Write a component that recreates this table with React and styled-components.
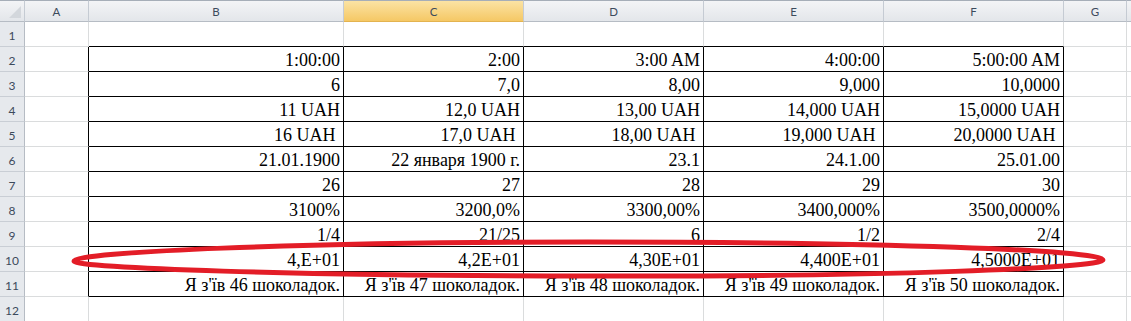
import React from "react";
import styled, { createGlobalStyle, css } from "styled-components";

const Global = createGlobalStyle`
  html, body { margin: 0; padding: 0; background: #ffffff; }
  body { width: 1131px; height: 321px; overflow: hidden; }
`;

const COLS = ["A", "B", "C", "D", "E", "F", "G", ""];
const WIDTHS = "25px 64px 255px 180px 180px 180px 180px 63px 1fr";
const GRID = "#dadcdd";
const HEAD_LINE = "#c5cbd3";

const Sheet = styled.div`
  position: relative;
  display: grid;
  grid-template-columns: ${WIDTHS};
  grid-template-rows: 22px repeat(12, 25px);
  width: 1131px;
  height: 321px;
  overflow: hidden;
`;

const HeadCell = styled.div`
  box-sizing: border-box;
  display: flex;
  align-items: center;
  justify-content: center;
  font-family: Lato, "Liberation Sans", sans-serif;
  font-size: 11.5px;
  color: #3c4a5c;
  border-top: 1px solid #a6aeb8;
  border-right: 1px solid ${HEAD_LINE};
  border-bottom: 1px solid #b6bcc4;
  background: linear-gradient(#f3f4f6, #e3e6ea);
  ${(p) =>
    p.$active &&
    css`
      background: linear-gradient(#fbe3a4, #f5c865);
      border-bottom-color: #e3b350;
      color: #3c4a5c;
    `}
`;

const Corner = styled(HeadCell)`
  position: relative;
  &::after {
    content: "";
    position: absolute;
    right: 3px;
    bottom: 3px;
    width: 0;
    height: 0;
    border-left: 12px solid transparent;
    border-bottom: 12px solid #d3d7dc;
  }
`;

const RowHead = styled.div`
  box-sizing: border-box;
  display: flex;
  align-items: center;
  justify-content: center;
  padding-top: 2px;
  font-family: Lato, "Liberation Sans", sans-serif;
  font-size: 12px;
  color: #3c4a5c;
  background: #e6e9ed;
  border-right: 1px solid #b6bcc4;
  border-bottom: 1px solid #c9ced5;
`;

const Cell = styled.div`
  box-sizing: border-box;
  display: flex;
  align-items: flex-end;
  justify-content: flex-end;
  padding: 0 3px 1px 2px;
  font-family: "Liberation Serif", "Times New Roman", serif;
  font-size: 18px;
  line-height: 20px;
  color: #000;
  white-space: pre;
  border-right: 1px solid ${(p) => (p.$edgeRight ? "#000" : GRID)};
  border-bottom: 1px solid ${(p) => (p.$edgeBottom ? "#000" : GRID)};
`;

const Overlay = styled.svg`
  position: absolute;
  left: 0;
  top: 0;
  pointer-events: none;
`;

const data = [
  ["1:00:00", "2:00", "3:00 AM", "4:00:00", "5:00:00 AM"],
  ["6", "7,0", "8,00", "9,000", "10,0000"],
  ["11 UAH", "12,0 UAH", "13,00 UAH", "14,000 UAH", "15,0000 UAH"],
  ["16 UAH ", "17,0 UAH ", "18,00 UAH ", "19,000 UAH ", "20,0000 UAH "],
  ["21.01.1900", "22 января 1900 г.", "23.1", "24.1.00", "25.01.00"],
  ["26", "27", "28", "29", "30"],
  ["3100%", "3200,0%", "3300,00%", "3400,000%", "3500,0000%"],
  ["1/4", "21/25", "6", "1/2", "2/4"],
  ["4,E+01", "4,2E+01", "4,30E+01", "4,400E+01", "4,5000E+01"],
  [
    "Я з'їв 46 шоколадок.",
    "Я з'їв 47 шоколадок.",
    "Я з'їв 48 шоколадок.",
    "Я з'їв 49 шоколадок.",
    "Я з'їв 50 шоколадок.",
  ],
];

function cellValue(row, col) {
  if (row >= 2 && row <= 11 && col >= 1 && col <= 5) return data[row - 2][col - 1];
  return "";
}

export default function App() {
  const rows = Array.from({ length: 12 }, (_, i) => i + 1);
  return (
    <>
      <Global />
      <Sheet>
        <Corner />
        {COLS.map((c) => (
          <HeadCell key={c || "H"} $active={c === "C"}>
            {c}
          </HeadCell>
        ))}
        {rows.map((r) => (
          <React.Fragment key={r}>
            <RowHead>{r}</RowHead>
            {COLS.map((c, ci) => {
              const inBox = r >= 2 && r <= 11 && ci >= 1 && ci <= 5;
              const edgeRight = inBox || (ci === 0 && r >= 2 && r <= 11);
              const edgeBottom = inBox || (r === 1 && ci >= 1 && ci <= 5);
              return (
                <Cell key={ci} $edgeRight={edgeRight} $edgeBottom={edgeBottom}>
                  {cellValue(r, ci)}
                </Cell>
              );
            })}
          </React.Fragment>
        ))}
        <Overlay width="1131" height="321" viewBox="0 0 1131 321">
          <path
            d="M 588 242 C 880 242, 1103 250, 1103 260 C 1103 268, 880 277, 588 276 C 300 276, 74 268, 74 261 C 74 252, 300 242, 588 242 Z"
            fill="none"
            stroke="#e31d27"
            strokeWidth="5"
          />
        </Overlay>
      </Sheet>
    </>
  );
}
